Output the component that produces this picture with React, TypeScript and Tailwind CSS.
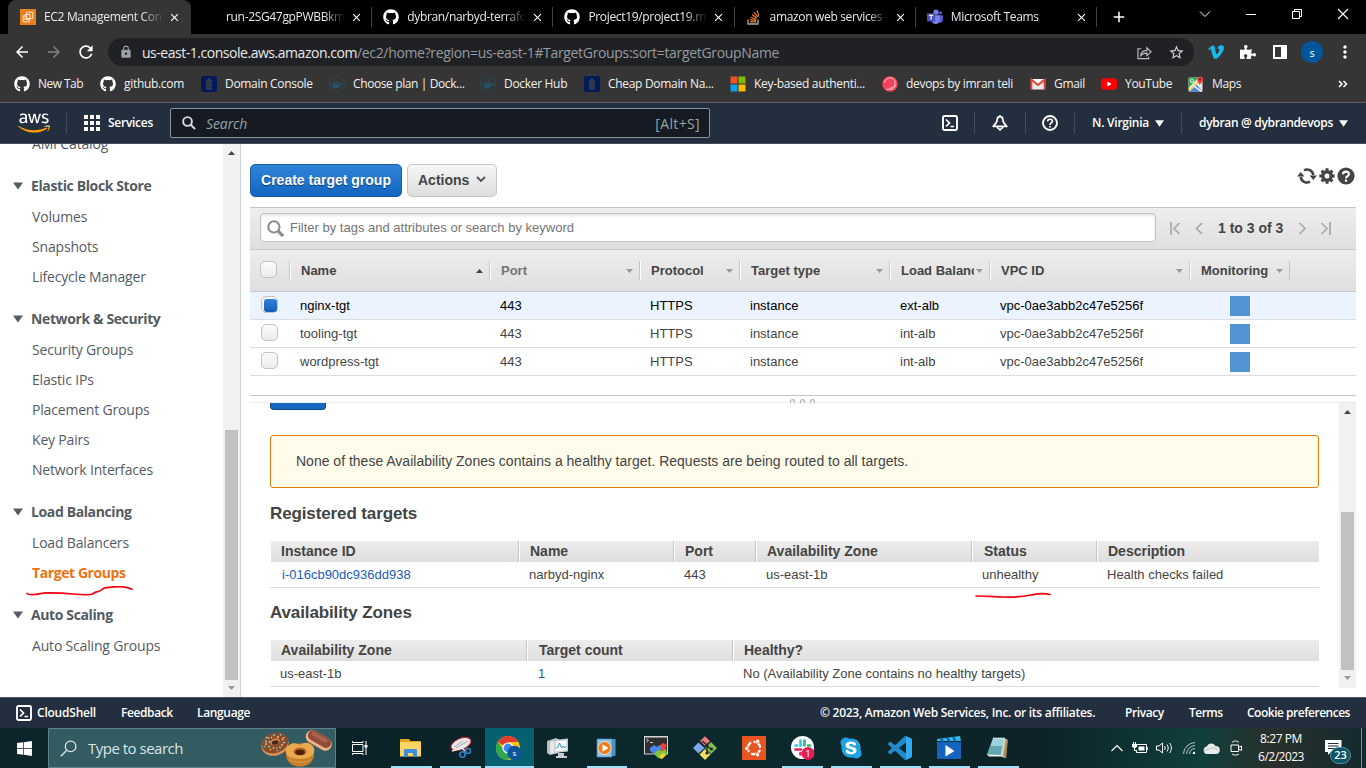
import type { ReactNode } from 'react';
import { FaGithub, FaAws, FaDocker, FaVimeoV, FaPuzzlePiece, FaWindows, FaSkype } from 'react-icons/fa';
import { MdRefresh, MdArrowBack, MdArrowForward, MdLock, MdStarBorder, MdMoreVert, MdAdd, MdClose } from 'react-icons/md';

/* ---------- small icons ---------- */

const Svg = ({ children, className = 'h-4 w-4', box = '0 0 16 16' }: { children: ReactNode; className?: string; box?: string }) => (
  <svg viewBox={box} className={`block shrink-0 ${className}`} fill="none">{children}</svg>
);

const Ec2Icon = () => (
  <Svg>
    <rect width="16" height="16" fill="#e8801f" />
    <path d="M6.500 3.200h6.300v6.300H6.500zM3.200 6.800v6h6v-1.600M3.200 6.800h1.600M5 5.500h5v5H5z" stroke="#fff2e0" strokeWidth=".9" />
  </Svg>
);
const StackIcon = () => (
  <Svg>
    <path d="M2 10.500v4.500h10v-4.500" stroke="#a9a9a9" strokeWidth="1.300" />
    <path d="M4 12.900h6M4.100 10.600l6 .8M4.700 8.200l5.600 2M6 5.600l4.900 3.400M8.100 3.300l3.700 4.700M11.200 1.500l1.500 5.800" stroke="#f48024" strokeWidth="1.200" />
  </Svg>
);
const TeamsIcon = () => (
  <Svg>
    <circle cx="9" cy="3.200" r="2.600" fill="#7b83eb" />
    <circle cx="13.400" cy="3.900" r="1.700" fill="#5059c9" />
    <path d="M10 6.200h5.200c.4 0 .8.300.8.800v3.800a2.900 2.900 0 01-5 2z" fill="#5059c9" />
    <path d="M4.500 6.200h7.700c.4 0 .7.300.7.700v4.600a4.300 4.300 0 01-8.400 0z" fill="#7b83eb" />
    <rect y="4.200" width="8.200" height="8.200" rx=".7" fill="#4b53bc" />
    <path d="M2 6.400h4.200M4.100 6.400v4.300" stroke="#fff" strokeWidth="1.100" />
  </Svg>
);
const BatteryBox = () => (
  <Svg>
    <rect width="16" height="16" rx="2" fill="#02195c" />
    <path d="M6.500 2.600h3v1.300h-3zM4.900 4.300h6.200v2H4.900zM4.900 6.800h6.200v2H4.900zM4.900 9.300h6.200v1.900H4.900zM5.200 11.700h5.600v1.700H5.200z" fill="#3a4048" />
  </Svg>
);
const DockerRing = () => (
  <span className="flex h-4 w-4 shrink-0 items-center justify-center rounded-full border border-[#24495a] text-[11px] text-[#235468]"><FaDocker /></span>
);
const MsIcon = () => (
  <Svg>
    <path d="M.5.5h7v7h-7z" fill="#f25022" /><path d="M8.500.5h7v7h-7z" fill="#7fba00" />
    <path d="M.5 8.500h7v7h-7z" fill="#00a4ef" /><path d="M8.500 8.500h7v7h-7z" fill="#ffb900" />
  </Svg>
);
const BallIcon = () => (
  <Svg>
    <circle cx="8" cy="8" r="7.800" fill="#f2425a" />
    <path d="M2.500 6.500A6 6 0 018.500 2C12 2.300 13.500 5 13 8c-.8 3-3 4.500-6 4.300M4.500 13c4 1.500 8-.5 9.500-4" stroke="#ffc9d0" strokeWidth="1" />
  </Svg>
);
const GmailIcon = () => (
  <Svg>
    <path d="M1.500 3h13v10.500h-13z" fill="#e9e9e9" />
    <path d="M1.500 3h13L8 9z" fill="#fff" />
    <path d="M1.300 13.500V3.600L8 9l6.700-5.400v9.900" stroke="#dc4437" strokeWidth="2" />
  </Svg>
);
const YoutubeIcon = () => (
  <Svg><rect y="2.200" width="16" height="11.600" rx="3" fill="#f00" /><path d="M6.300 5.600v4.800L10.600 8z" fill="#fff" /></Svg>
);
const MapsIcon = () => (
  <Svg>
    <rect x=".5" y="1.500" width="14" height="14" rx="1" fill="#e8eaed" />
    <path d="M.5 15V2.500a1 1 0 011-1h9L.5 12z" fill="#34a853" />
    <path d="M1 15.500L8 8l6.500 7.500z" fill="#4285f4" />
    <path d="M2 14L13 3" stroke="#fdd835" strokeWidth="1.800" />
    <path d="M6 10l7.500 5.500" stroke="#fff" strokeWidth="1.500" />
    <circle cx="4" cy="5" r="1.600" stroke="#fff" strokeWidth=".9" />
    <path d="M11.800 9.500C11.600 7 9.200 6.200 9.200 3.400a2.900 2.900 0 015.800 0c0 2.800-2.900 3.600-3.200 6.100z" fill="#ea4335" />
    <circle cx="12.100" cy="3.300" r="1.100" fill="#7d1f17" />
  </Svg>
);
const ShellIcon = () => (
  <Svg><rect x="1" y="1" width="14" height="14" rx="1.500" stroke="currentColor" strokeWidth="1.900" /><path d="M4 4.500L7.500 8 4 11.500M8.500 11.500H12" stroke="currentColor" strokeWidth="1.700" /></Svg>
);
const BellIcon = () => (
  <Svg><path d="M8 1.600c1.900 0 2.900 1.600 2.900 3.500 0 2.600 1.700 4 3.900 6.200H1.200c2.200-2.200 3.900-3.600 3.900-6.200 0-1.900 1-3.500 2.900-3.500zM5.600 11.500v1.200L8 15l2.400-2.300v-1.200M8 0v1.500" stroke="currentColor" strokeWidth="1.700" strokeLinejoin="round" /></Svg>
);
const HelpRing = () => (
  <Svg><circle cx="8" cy="8" r="7" stroke="currentColor" strokeWidth="1.900" /><path d="M5.600 6.500C5.600 3.500 10.500 3.600 10.400 6.300 10.300 8 8 7.900 8 9.900M8 10.900v1.700" stroke="currentColor" strokeWidth="1.700" /></Svg>
);
const Down = ({ className = 'h-[7px] w-[9px]' }: { className?: string }) => (
  <Svg box="0 0 10 7" className={className}><path d="M0 0h10L5 7z" fill="currentColor" /></Svg>
);
const SmallDown = ({ className = 'text-[#999]' }: { className?: string }) => (
  <Svg box="0 0 7 4" className={`h-1 w-[7px] ${className}`}><path d="M0 0h7L3.500 4z" fill="currentColor" /></Svg>
);
const SmallUp = ({ className = 'text-[#444]' }: { className?: string }) => (
  <Svg box="0 0 7 4" className={`h-1 w-[7px] ${className}`}><path d="M0 4h7L3.500 0z" fill="currentColor" /></Svg>
);

/* ---------- browser chrome ---------- */

const tabs: { title: string; icon: ReactNode }[] = [
  { title: 'EC2 Management Console', icon: <Ec2Icon /> },
  { title: 'run-2SG47gpPWBBkmW', icon: null },
  { title: 'dybran/narbyd-terraform', icon: <FaGithub className="h-4 w-4 text-white" /> },
  { title: 'Project19/project19.md', icon: <FaGithub className="h-4 w-4 text-white" /> },
  { title: 'amazon web services - ', icon: <StackIcon /> },
  { title: 'Microsoft Teams', icon: <TeamsIcon /> },
];

const TabStrip = () => (
  <div className="flex h-[34px] bg-black pl-2 text-[12px] tracking-[-0.33px] text-[#e8eaed]">
    {tabs.map((t, i) => (
      <div key={t.title} className={`relative flex h-full items-center ${i === 0 ? 'w-[183px] rounded-t-lg bg-[#353535] pl-3' : 'w-[181.200px] pl-[11px]'}`}>
        <span className="block h-4 w-4">{t.icon}</span>
        <span className="ml-2 w-[119px] overflow-hidden whitespace-pre [mask-image:linear-gradient(to_right,#000_82%,transparent)]">{t.title}</span>
        <MdClose className="ml-[5px] h-[13px] w-[13px] text-white" />
        {i > 0 && <span className="absolute right-0 top-[7px] h-5 w-px bg-[#444]" />}
      </div>
    ))}
    <MdAdd className="ml-[13px] mt-2 h-[18px] w-[18px] text-white" />
    <div className="ml-auto flex h-7 items-center text-white">
      <Svg box="0 0 12 12" className="mr-[34px] h-3 w-3"><path d="M1 3.500l5 5 5-5" stroke="currentColor" /></Svg>
      <Svg box="0 0 12 12" className="mr-[34px] h-3 w-3"><path d="M1 6.500h10" stroke="currentColor" /></Svg>
      <Svg box="0 0 12 12" className="mr-[34px] h-3 w-3"><path d="M1.500 3.500h7v7h-7zM3.500 3.500v-2h7v7h-2" stroke="currentColor" /></Svg>
      <Svg box="0 0 12 12" className="mr-[17px] h-3 w-3"><path d="M1 1l10 10M11 1L1 11" stroke="currentColor" strokeWidth="1.100" /></Svg>
    </div>
  </div>
);

const Toolbar = () => (
  <div className="flex h-8 items-center bg-[#353535] pl-[13px] pt-[4px]">
    <MdArrowBack className="h-[18px] w-[18px] text-white" />
    <MdArrowForward className="ml-[14px] h-[18px] w-[18px] text-[#828282]" />
    <MdRefresh className="ml-[13px] h-[20px] w-[20px] text-white" />
    <div className="ml-3 flex h-7 w-[1086px] items-center rounded-full bg-[#202124] pl-[11px] text-[14px]">
      <MdLock className="h-[14px] w-[14px] text-[#9aa0a6]" />
      <span className="ml-[9px] tracking-[-0.47px] text-[#e8eaed]">us-east-1.console.aws.amazon.com</span>
      <span className="tracking-[-0.33px] text-[#969ba1]">/ec2/home?region=us-east-1#TargetGroups:sort=targetGroupName</span>
      <Svg className="ml-auto h-[15px] w-[15px] text-[#bdc1c6]"><path d="M4.500 4H1v10.500h11.500v-2M4 11.500c0-3.500 2.500-5.500 6.500-5.500V3l4.500 4.300-4.500 4.200V8.700C7.500 8.700 5.500 9.500 4 11.500z" stroke="currentColor" strokeWidth="1.200" /></Svg>
      <MdStarBorder className="ml-4 mr-[9px] h-[17px] w-[17px] text-[#d0d3d7]" />
    </div>
    <FaVimeoV className="ml-[13px] h-[18px] w-[18px] text-[#1ab7ea]" />
    <FaPuzzlePiece className="ml-[15px] h-4 w-4 text-white" />
    <Svg className="ml-[17px] h-[14px] w-[14px]" box="0 0 14 14"><path d="M1 1h12v12H1z" stroke="#fff" strokeWidth="2" /><path d="M8 1h5v12H8z" fill="#fff" /></Svg>
    <span className="ml-[14px] flex h-[22px] w-[22px] items-center justify-center rounded-full bg-[#01579b] text-[11px] leading-none text-white">s</span>
    <MdMoreVert className="ml-[12px] h-5 w-5 text-white" />
  </div>
);

const bookmarks: { label: string; icon: ReactNode; width: string }[] = [
  { label: 'New Tab', icon: <FaGithub className="h-4 w-4 text-white" />, width: 'w-[86px] tracking-[-0.54px]' },
  { label: 'github.com', icon: <FaGithub className="h-4 w-4 text-white" />, width: 'w-[101px]' },
  { label: 'Domain Console', icon: <BatteryBox />, width: 'w-[128px]' },
  { label: 'Choose plan | Dock...', icon: <DockerRing />, width: 'w-[151px] tracking-[-0.39px]' },
  { label: 'Docker Hub', icon: <DockerRing />, width: 'w-[104px]' },
  { label: 'Cheap Domain Na...', icon: <BatteryBox />, width: 'w-[146px]' },
  { label: 'Key-based authenti...', icon: <MsIcon />, width: 'w-[152px]' },
  { label: 'devops by imran teli', icon: <BallIcon />, width: 'w-[148px]' },
  { label: 'Gmail', icon: <GmailIcon />, width: 'w-[71px]' },
  { label: 'YouTube', icon: <YoutubeIcon />, width: 'w-[87px]' },
  { label: 'Maps', icon: <MapsIcon />, width: 'w-[60px]' },
];

const Bookmarks = () => (
  <div className="flex h-[37px] items-center border-b border-[#606060] bg-[#353535] pl-[14px] text-[12px] tracking-[-0.31px] text-[#f1f1f1]">
    {bookmarks.map((b) => (
      <div key={b.label} className={`flex shrink-0 items-center gap-2 whitespace-nowrap ${b.width}`}>{b.icon}<span>{b.label}</span></div>
    ))}
    <Svg box="0 0 10 8" className="ml-[90px] h-2 w-[10px]"><path d="M1 1l3 3-3 3M5.500 1l3 3-3 3" stroke="#fff" strokeWidth="1.500" /></Svg>
  </div>
);

/* ---------- AWS console ---------- */

const Sep = ({ className }: { className: string }) => <span className={`h-[22px] w-px bg-[#414d5c] ${className}`} />;

const AwsNav = () => (
  <div className="flex h-[41px] items-center border-b border-[#414d5c] bg-[#232f3e] pl-[18px] text-[12px] font-semibold text-white">
    <div className="relative h-8 w-8">
      <FaAws className="h-8 w-8 [clip-path:inset(0_0_38%_0)]" />
      <FaAws className="absolute left-0 top-0 h-8 w-8 text-[#ff9900] [clip-path:inset(62%_0_0_0)]" />
    </div>
    <Sep className="ml-4" />
    <Svg className="ml-[17px] h-4 w-4">
      {[0, 6, 12].map((y) => [0, 6, 12].map((x) => <rect key={`${x}-${y}`} x={x} y={y} width="4" height="4" fill="#fff" />))}
    </Svg>
    <span className="ml-2 w-[45px] tracking-[-0.27px]">Services</span>
    <div className="ml-[17px] flex h-[30px] w-[540px] items-center rounded-[2px] border border-[#879596] bg-[#161a22] pl-[11px] pr-[9px] text-[14px] font-normal text-[#95a5a6]">
      <Svg className="h-[14px] w-[14px]"><circle cx="6.300" cy="6.300" r="5" stroke="#d5dbdb" strokeWidth="2.200" /><path d="M10 10l5 5" stroke="#d5dbdb" strokeWidth="2.400" /></Svg>
      <span className="ml-[10px] italic tracking-[-0.1px]">Search</span>
      <span className="ml-auto tracking-[0.35px]">[Alt+S]</span>
    </div>
    <div className="ml-[232px] flex items-center">
      <ShellIcon />
      <Sep className="ml-4" />
      <span className="ml-[17px]"><BellIcon /></span>
      <Sep className="ml-[17px]" />
      <span className="ml-4"><HelpRing /></span>
      <Sep className="ml-4" />
      <span className="ml-[17px] w-[57px] whitespace-nowrap tracking-[-0.25px]">N. Virginia</span>
      <Down className="ml-[6px] h-[7px] w-[9px]" />
      <Sep className="ml-[17px]" />
      <span className="ml-[17px] w-[134px] whitespace-nowrap tracking-[-0.32px]">dybran @ dybrandevops</span>
      <Down className="ml-[6px] h-[7px] w-[9px]" />
    </div>
  </div>
);

const groups: { name: string; items: string[] }[] = [
  { name: 'Elastic Block Store', items: ['Volumes', 'Snapshots', 'Lifecycle Manager'] },
  { name: 'Network & Security', items: ['Security Groups', 'Elastic IPs', 'Placement Groups', 'Key Pairs', 'Network Interfaces'] },
  { name: 'Load Balancing', items: ['Load Balancers', 'Target Groups'] },
  { name: 'Auto Scaling', items: ['Auto Scaling Groups'] },
];

const Sidebar = () => (
  <aside className="flex h-full w-[241px] shrink-0 border-r border-[#cdd4d9] text-[14px] text-[#545b64]">
    <div className="relative h-full w-[223px] overflow-hidden">
      <div className="-mt-[10px] h-5 pl-8 leading-5 tracking-[-0.16px]">AMI Catalog</div>
      {groups.map((g) => (
        <div key={g.name} className="pt-[15px]">
          <div className="flex h-[30px] items-center pl-[13px] pt-[4px] font-bold tracking-[-0.38px]">
            <Down className="mr-2 h-2 w-[10px]" /><span className="mb-[2px]">{g.name}</span>
          </div>
          <div className="-mb-[5px] pt-[3px]">
            {g.items.map((it) => (
              <div key={it} className={`h-[30px] pl-8 leading-[30px] ${it === 'Target Groups' ? 'font-bold tracking-[-0.42px] text-[#ec7211]' : 'tracking-[-0.18px]'}`}>{it}</div>
            ))}
          </div>
        </div>
      ))}
      <svg viewBox="0 0 110 14" className="absolute left-[24px] top-[442px] h-[14px] w-[110px]" fill="none">
        <path d="M3 7.500c1 1 3 1.300 8 1 5-.8 8-1.800 14-1.700 10 .1 16 .4 24 1.200 8 .8 17 1.500 20-.2 2-2 3-1.500 6-2.500 4-1.200 3-3 6-3.400 5-.5 10-1.600 16-1.200 5 .3 7 1 11 2.500" stroke="#f5000c" strokeWidth="1.700" strokeLinecap="round" />
      </svg>
    </div>
    <div className="flex h-full w-[17px] flex-col items-center bg-[#f1f1f1] pt-[7px]">
      <SmallUp />
      <div className="mt-[275px] h-[250px] w-[13px] bg-[#c1c1c1]" />
      <div className="mt-[6px]"><SmallDown /></div>
    </div>
  </aside>
);

const cols: { name: string; width: string }[] = [
  { name: 'Name', width: 'w-[200px]' },
  { name: 'Port', width: 'w-[150px]' },
  { name: 'Protocol', width: 'w-[100px]' },
  { name: 'Target type', width: 'w-[150px]' },
  { name: 'Load Balancer', width: 'w-[100px]' },
  { name: 'VPC ID', width: 'w-[200px]' },
  { name: 'Monitoring', width: 'w-[100px]' },
];
const rows: string[][] = [
  ['nginx-tgt', '443', 'HTTPS', 'instance', 'ext-alb', 'vpc-0ae3abb2c47e5256f'],
  ['tooling-tgt', '443', 'HTTPS', 'instance', 'int-alb', 'vpc-0ae3abb2c47e5256f'],
  ['wordpress-tgt', '443', 'HTTPS', 'instance', 'int-alb', 'vpc-0ae3abb2c47e5256f'],
];

const CheckBox = ({ checked = false, className = '' }: { checked?: boolean; className?: string }) => (
  <span className={`block h-[17px] w-[17px] rounded-[5px] border border-[#c3c3c3] bg-gradient-to-b from-[#fbfbfb] to-[#ececec] pl-[2px] pt-[2px] ${className}`}>
    {checked && <span className="block h-[13px] w-[13px] rounded-[3px] bg-gradient-to-b from-[#2f83d8] to-[#1160b8]" />}
  </span>
);

const Pager = () => (
  <div className="flex items-center pt-[2px] text-[#a9a9a9]">
    <Svg box="0 0 11 13" className="ml-[14px] h-[13px] w-[11px]"><path d="M1 0v13M9.500 1L4 6.500 9.500 12" stroke="currentColor" strokeWidth="1.700" /></Svg>
    <Svg box="0 0 11 13" className="ml-[12px] h-[13px] w-[11px]"><path d="M9 1L3.500 6.500 9 12" stroke="currentColor" strokeWidth="1.700" /></Svg>
    <span className="ml-[14px] w-[66px] whitespace-nowrap text-[14px] font-bold text-[#444]">1 to 3 of 3</span>
    <Svg box="0 0 11 13" className="ml-[13px] h-[13px] w-[11px]"><path d="M2.500 1L8 6.500 2.500 12" stroke="currentColor" strokeWidth="1.700" /></Svg>
    <Svg box="0 0 11 13" className="ml-[12px] h-[13px] w-[11px]"><path d="M10 0v13M1.500 1L7 6.500 1.500 12" stroke="currentColor" strokeWidth="1.700" /></Svg>
  </div>
);

const GroupTable = () => (
  <div className="mt-[10px] w-[1106px] border-t border-[#c5c5c5] text-[13px]">
    <div className="flex h-[42px] items-center border-b border-[#c9c9c9] bg-gradient-to-b from-[#eeeeee] to-[#dfdfdf] pb-[3px] pl-[10px]">
      <div className="flex h-[29px] w-[896px] items-center rounded border border-[#c4c4c4] bg-white pl-[6px] text-[#757575] shadow-[inset_0_2px_3px_#e6e6e6]">
        <Svg className="mt-[2px] h-[17px] w-[17px]"><circle cx="6.500" cy="6.500" r="5.300" stroke="#8a8a8a" strokeWidth="1.900" /><path d="M10.500 10.500l4.700 4.600" stroke="#8a8a8a" strokeWidth="3" /></Svg>
        <span className="ml-[6px] mt-[2px]">Filter by tags and attributes or search by keyword</span>
      </div>
      <Pager />
    </div>
    <div className="flex h-[42px] items-center border-b border-[#c6c6c6] bg-gradient-to-b from-[#ededed] to-[#dfdfdf] font-bold text-[#444]">
      <div className="flex w-10 border-r border-[#c5c5c5] pb-[2px] pl-[10px]"><CheckBox /></div>
      {cols.map((c, i) => (
        <div key={c.name} className={`flex h-[19px] items-center border-l border-white border-r border-r-[#c5c5c5] pl-[10px] pr-[6px] ${c.width} ${i === 1 ? 'text-[#757575]' : ''}`}>
          <span className="mr-[2px] min-w-0 flex-1 overflow-hidden whitespace-nowrap">{c.name}</span>
          {i === 0 ? <SmallUp /> : <SmallDown />}
        </div>
      ))}
    </div>
    {rows.map((r, i) => (
      <div key={r[0]} className={`flex h-7 items-center border-b border-[#dcdcdc] ${i === 0 ? 'bg-[#eaf3fe] text-black' : 'text-[#444]'}`}>
        <div className="w-10 pl-[11px]"><CheckBox checked={i === 0} className="-mt-[3px]" /></div>
        {r.map((v, k) => <div key={cols[k].name} className={`pl-[10px] ${cols[k].width}`}>{v}</div>)}
        <div className="w-[100px] pl-10"><div className="mt-px h-5 w-5 bg-[#5294d1]" /></div>
      </div>
    ))}
  </div>
);

const RoundTools = () => (
  <div className="flex items-center text-[#444]">
    <Svg box="0 0 20 18" className="h-[18px] w-5">
      <path d="M3.700 10A6.300 6.300 0 0013 14.700M16.300 8A6.300 6.300 0 007 3.300" stroke="currentColor" strokeWidth="2.600" />
      <path d="M0 9.500L3.700 5l3.800 4.500zM12.500 8.500h7.500L16.300 13z" fill="currentColor" />
    </Svg>
    <Svg className="ml-[2px] h-4 w-4">
      <circle cx="8" cy="8" r="4.200" stroke="currentColor" strokeWidth="3.400" />
      <path d="M8 .3v3M8 12.700v3M.3 8h3M12.700 8h3M2.600 2.600l2 2M11.400 11.400l2 2M2.600 13.400l2-2M11.400 4.600l2-2" stroke="currentColor" strokeWidth="3" />
    </Svg>
    <Svg box="0 0 18 18" className="ml-[2px] h-[18px] w-[18px]"><circle cx="9" cy="9" r="8.600" fill="currentColor" /><path d="M6 7.300C6 3.800 12 3.900 12 7 12 9.100 9 9 9 11.200M9 12.500v2.200" stroke="#fff" strokeWidth="2.200" /></Svg>
  </div>
);

type Cell = { head: string; value: string; width: string; headPad: string; valuePad: string };
const targetCells: Cell[] = [
  { head: 'Instance ID', value: 'i-016cb90dc936dd938', width: 'w-[248px]', headPad: 'pl-[10px]', valuePad: 'pl-[11px] text-[#1a60b8]' },
  { head: 'Name', value: 'narbyd-nginx', width: 'w-[155px]', headPad: 'pl-[11px]', valuePad: 'pl-[10px]' },
  { head: 'Port', value: '443', width: 'w-[82px]', headPad: 'pl-[11px]', valuePad: 'pl-[10px]' },
  { head: 'Availability Zone', value: 'us-east-1b', width: 'w-[216px]', headPad: 'pl-[11px]', valuePad: 'pl-[10px]' },
  { head: 'Status', value: 'unhealthy', width: 'w-[125px]', headPad: 'pl-[12px]', valuePad: 'pl-[10px]' },
  { head: 'Description', value: 'Health checks failed', width: 'w-[222px]', headPad: 'pl-[11px]', valuePad: 'pl-[10px]' },
];
const zoneCells: Cell[] = [
  { head: 'Availability Zone', value: 'us-east-1b', width: 'w-[256px]', headPad: 'pl-[10px]', valuePad: 'pl-[9px]' },
  { head: 'Target count', value: '1', width: 'w-[206px]', headPad: 'pl-[12px]', valuePad: 'pl-[11px] text-[#2a5a80]' },
  { head: 'Healthy?', value: 'No (Availability Zone contains no healthy targets)', width: 'w-[586px]', headPad: 'pl-[11px]', valuePad: 'pl-[10px]' },
];

const DetailTable = ({ cells }: { cells: Cell[] }) => (
  <div className="w-[1049px] border-b border-[#dadada]">
    <div className="ml-px flex h-[21px] items-center bg-gradient-to-b from-[#ededed] to-[#dedede] text-[14px] font-bold text-[#444]">
      {cells.map((c, i) => (
        <div key={c.head} className={`h-[21px] shrink-0 whitespace-nowrap leading-[21px] ${c.headPad} ${c.width} ${i < cells.length - 1 ? 'border-r border-[#c5c5c5] shadow-[1px_0_0_#fff]' : ''}`}>{c.head}</div>
      ))}
    </div>
    <div className="flex h-[25px] pl-px text-[13px] text-[#444]">
      {cells.map((c) => (
        <div key={c.head} className={`shrink-0 whitespace-nowrap leading-[25px] ${c.width} ${c.valuePad}`}>{c.value}</div>
      ))}
    </div>
  </div>
);

const Details = () => (
  <div className="flex h-[285px] w-[1106px]">
    <div className="relative w-[1089px] pl-5">
      <div className="h-[7px] w-14 rounded-b border border-t-0 border-[#12457f] bg-[#1568c2]" />
      <div className="mt-[25px] flex h-[53px] w-[1049px] items-center rounded-[3px] border border-[#df7d0c] bg-[#fffceb] pl-[25px] text-[14px] text-[#444]">
        None of these Availability Zones contains a healthy target. Requests are being routed to all targets.
      </div>
      <h2 className="mt-4 h-[37px] text-[17px] font-bold leading-5 tracking-[-0.12px] text-[#444]">Registered targets</h2>
      <DetailTable cells={targetCells} />
      <h2 className="mt-[15px] h-[37px] text-[17px] font-bold leading-5 tracking-[-0.12px] text-[#444]">Availability Zones</h2>
      <DetailTable cells={zoneCells} />
      <svg viewBox="0 0 80 10" className="absolute left-[723px] top-[187px] h-[10px] w-20" fill="none">
        <path d="M3 6c8-.2 16 .5 27 1 12 .6 20-.4 28-2 6-1.200 11-2.400 19-.5" stroke="#f5000c" strokeWidth="1.700" strokeLinecap="round" />
      </svg>
    </div>
    <div className="flex h-full w-[17px] flex-col items-center bg-[#f1f1f1] pt-[7px]">
      <SmallUp />
      <div className="mt-[98px] h-[158px] w-[13px] bg-[#c1c1c1]" />
      <div className="mt-[6px]"><SmallDown /></div>
    </div>
  </div>
);

const Main = () => (
  <main className="h-full flex-1 overflow-hidden pl-[9px] pt-5 font-['Liberation_Sans',Arial,sans-serif]">
    <div className="flex h-[33px] text-[14px] font-bold">
      <button className="h-[33px] w-[152px] whitespace-nowrap rounded-[5px] border border-[#165cab] bg-gradient-to-b from-[#3083d9] to-[#1266c0] text-white [text-shadow:0_1px_1px_#0b3c73]">Create target group</button>
      <button className="ml-[5px] flex h-[33px] w-[90px] items-center rounded-[5px] border border-[#c6c6c6] bg-gradient-to-b from-[#f6f6f6] to-[#dedede] pl-[10px] text-[#444]">
        Actions
        <Svg box="0 0 10 7" className="mb-[2px] ml-[7px] h-[7px] w-[10px]"><path d="M1 1l4 4 4-4" stroke="#555" strokeWidth="1.900" /></Svg>
      </button>
      <div className="-mt-[11px] ml-[800px] flex items-center pt-px"><RoundTools /></div>
    </div>
    <GroupTable />
    <div className="relative mt-[19px] h-2 w-[1106px] border-b border-t border-b-[#ebebeb] border-t-[#c4c4c4]">
      <div className="absolute left-[540px] top-[3px] flex h-[3px] gap-[5px]">
        {[0, 1, 2].map((d) => <span key={d} className="h-[4px] w-[5px] rounded-t-full border border-b-0 border-[#b5b5b5] bg-[#eee]" />)}
      </div>
    </div>
    <Details />
  </main>
);

const Footer = () => (
  <div className="flex h-[31px] items-center border-t border-[#4b5563] bg-[#232f3e] pl-4 text-[12px] font-semibold text-white">
    <ShellIcon />
    <span className="ml-[5px] w-[84px] tracking-[-0.22px]">CloudShell</span>
    <span className="w-[76px] tracking-[-0.4px]">Feedback</span>
    <span className="w-[623px] tracking-[-0.35px]">Language</span>
    <span className="w-[305px] whitespace-nowrap tracking-[-0.27px]">© 2023, Amazon Web Services, Inc. or its affiliates.</span>
    <span className="w-16 tracking-[-0.4px]">Privacy</span>
    <span className="w-[58px] tracking-[-0.5px]">Terms</span>
    <span className="whitespace-nowrap tracking-[-0.49px]">Cookie preferences</span>
  </div>
);

/* ---------- Windows taskbar ---------- */

const Pastries = () => (
  <svg viewBox="0 0 74 38" className="ml-auto mr-[2px] block h-[38px] w-[74px]" fill="none">
    <ellipse cx="16" cy="15.500" rx="13.800" ry="11" transform="rotate(-18 16 15.500)" fill="#d9935a" />
    <ellipse cx="16" cy="14" rx="13.500" ry="10" transform="rotate(-18 16 14)" fill="#8e4a2c" />
    <ellipse cx="16" cy="12.800" rx="5" ry="3.200" transform="rotate(-18 16 13)" fill="#d38a50" />
    <ellipse cx="16" cy="13.500" rx="3.500" ry="2" transform="rotate(-18 16 13)" fill="#4b2416" />
    <path d="M6 12l2 1M9 8l1 2M14 6l2 .5M21 5l1 1.500M25 8l-1 2M26 13l-2 1M20 18l2 1M14 20l1-2M9 18l2-1M5 17l1 1M18 22l1-1M11 12l-1 2" stroke="#5fd0c5" strokeWidth="1.400" />
    <path d="M7 9l1-1M12 9l1-1M18 8l2 0M23 11l1-1M22 16l2 0M17 19l1 0M11 21l1-1M6 15l2 0" stroke="#f3c34a" strokeWidth="1.400" />
    <g transform="rotate(30 60 11)">
      <rect x="46" y="5" width="28" height="13" rx="6.500" fill="#f0b184" />
      <rect x="47.500" y="5" width="25" height="10" rx="5" fill="#8f4b37" />
      <rect x="50" y="6.500" width="18" height="4" rx="2" fill="#a9634c" />
    </g>
    <ellipse cx="41" cy="26" rx="14" ry="11.500" fill="#c87f2c" />
    <path d="M27 20c3-6 8-7 14-4 5-4 12-2 14 3 2 6-4 11-14 11s-16-4-14-10z" fill="#eaa94e" />
    <ellipse cx="41" cy="22.500" rx="6.500" ry="4" fill="#b86a25" />
    <ellipse cx="41" cy="23.200" rx="4.800" ry="2.800" fill="#4e2108" />
    <path d="M30 30c5 4 17 5 22 0" stroke="#dc9a48" strokeWidth="1" />
  </svg>
);

const big = 'h-6 w-6';
const b24 = '0 0 24 24';

const apps: { id: string; icon: ReactNode; open: boolean; active?: boolean }[] = [
  { id: 'explorer', open: true, icon: (
    <Svg box={b24} className={big}><path d="M1 4c0-.6.400-1 1-1h8l1.500 2H21c.6 0 1 .4 1 1v14H1z" fill="#e9a417" /><path d="M1 6h21v14.500H1z" fill="#fcd462" /><path d="M5 21v-6.500c0-.8.600-1.500 1.500-1.500h10c.9 0 1.500.7 1.500 1.500V21h-4v-4H9v4z" fill="#3c8fe0" /></Svg>) },
  { id: 'snip', open: true, icon: (
    <Svg box={b24} className={big}><ellipse cx="13" cy="8" rx="10.500" ry="5.500" transform="rotate(-22 13 8)" fill="#e9eaec" stroke="#c9252b" strokeWidth="1" /><path d="M6 11l9-6M8 12l12-7" stroke="#a5a8ad" /><path d="M4 15l10-3M13 11l5 5" stroke="#eee" strokeWidth="1.500" /><circle cx="14.500" cy="18.500" r="2.700" stroke="#2f7fc5" strokeWidth="1.600" /><circle cx="20" cy="15" r="2.500" stroke="#2f7fc5" strokeWidth="1.600" /></Svg>) },
  { id: 'chrome', open: true, active: true, icon: (
    <Svg box="0 0 26 24" className="h-6 w-[26px]">
      <circle cx="12" cy="12" r="12" fill="#fbc116" />
      <path d="M12 12L1.600 6A12 12 0 0122.400 6H12z" fill="#e33b2e" /><path d="M1.600 6A12 12 0 0012 24l5-9-9-1z" fill="#2da94f" />
      <circle cx="12" cy="12" r="5.600" fill="#fff" /><circle cx="12" cy="12" r="4.400" fill="#4285f4" />
      <circle cx="18.500" cy="17" r="7.200" fill="#0b559b" /><text x="18.500" y="19.700" fontSize="8" textAnchor="middle" fill="#fff">s</text>
    </Svg>) },
  { id: 'monitor', open: false, icon: (
    <Svg box={b24} className={big}><path d="M1 5l9-3 3 2v13l-9 2-3-2z" fill="#b9bdc1" /><path d="M4 6l9-3v13l-9 2z" fill="#e5e7e9" /><path d="M8 4l14-1.500v13L8 17z" fill="#c9cdd1" /><path d="M9.500 5.500l11-1.300v10l-11 1.300z" fill="#f5fafd" /><path d="M10 12l2-1 1.500-4 2 5 1.500-2 1.500 2 2-2" stroke="#3d92c4" /><path d="M12 17h6v3h3v2H10v-2h2z" fill="#c9ccd0" /></Svg>) },
  { id: 'player', open: true, icon: (
    <Svg box={b24} className={big}><path d="M5 3h15.500v17H8z" fill="#4b95c6" /><path d="M2 3h15v18H2z" fill="#8fc6e4" stroke="#3f84b3" strokeWidth=".7" /><circle cx="9.500" cy="12" r="6.500" fill="#ef7d1a" stroke="#fff" strokeWidth=".6" /><path d="M7.500 8.500v7l6-3.500z" fill="#fff" /></Svg>) },
  { id: 'terminal', open: false, icon: (
    <Svg box={b24} className={big}><rect y="0" width="24" height="18.500" fill="#d5d5d5" /><path d="M1 1.500h22v16H1z" fill="#303030" /><path d="M2.500 3l2 1.500-2 1.500M6 6.500h3" stroke="#fff" strokeWidth=".8" /><path d="M15 10l4-3 4 2-2 5-4 3z" fill="#e9433c" /><path d="M6 12l4-3 3 2 2-2 3 3-6 6-3-1-3-2z" fill="#4a86ee" /><path d="M10 18l4-4 4 1 4-2 1 5-5 5-4-1z" fill="#7dc832" /><path d="M15 20l4-3 3 2-4 4z" fill="#f3cf3a" /></Svg>) },
  { id: 'git', open: false, icon: (
    <Svg box={b24} className={big}><path d="M12 .3L17 5l-5 5-5-5z" fill="#ef7a7a" /><path d="M5.500 6.500l6 5.500-6 5.500L0 12z" fill="#7fa8ec" /><path d="M18 6l6 6-6 6-6-6z" fill="#80b955" /><path d="M12 13l5.500 5.500L12 24l-5.500-5.500z" fill="#f2dc62" /><path d="M9 5l5 4v9M14 10l4 3" stroke="#1c2b20" strokeWidth="1.300" /><circle cx="14" cy="9" r="1.600" fill="#1c2b20" /><circle cx="14" cy="17" r="1.600" fill="#1c2b20" /><circle cx="18.500" cy="13" r="1.600" fill="#1c2b20" /></Svg>) },
  { id: 'ubuntu', open: false, icon: (
    <Svg box={b24} className={big}><path d="M0 0h24v24H0z" fill="#e95420" /><circle cx="12" cy="12" r="6.200" stroke="#fff" strokeWidth="2.200" strokeDasharray="10.500 2.490" strokeDashoffset="-2" /><circle cx="4.700" cy="12.500" r="2" fill="#fff" stroke="#e95420" strokeWidth=".8" /><circle cx="15.700" cy="5.300" r="2.100" fill="#fff" stroke="#e95420" strokeWidth=".8" /><circle cx="15.500" cy="18.800" r="2.100" fill="#fff" stroke="#e95420" strokeWidth=".8" /></Svg>) },
  { id: 'slack', open: true, icon: (
    <Svg box={b24} className={big}>
      <circle cx="11.500" cy="11.500" r="11.500" fill="#fff" />
      <path d="M9.500 4.500v5.500" stroke="#36c5f0" strokeWidth="2.600" strokeLinecap="round" /><path d="M4.500 9.500H6" stroke="#36c5f0" strokeWidth="2.600" strokeLinecap="round" />
      <path d="M13.500 4.500v5M17 9.500h2" stroke="#2eb67d" strokeWidth="2.600" strokeLinecap="round" />
      <path d="M4.500 13.500H10M9.500 17v1.500" stroke="#e01e5a" strokeWidth="2.600" strokeLinecap="round" /><path d="M13.500 13.500H18" stroke="#ecb22e" strokeWidth="2.600" strokeLinecap="round" />
      <circle cx="17" cy="17.500" r="6.500" fill="#e01e5a" /><text x="17" y="20.900" fontSize="9.500" textAnchor="middle" fill="#fff">1</text>
    </Svg>) },
  { id: 'skype', open: true, icon: (
    <span className="flex h-6 w-6 items-center justify-center rounded-full bg-[radial-gradient(circle,#fff_55%,transparent_56%)] text-[24px] text-[#1ba3e6]"><FaSkype /></span>) },
  { id: 'vscode', open: true, icon: (
    <Svg box={b24} className={big}>
      <path d="M23.150 2.587L18.210.21a1.494 1.494 0 0 0-1.705.29l-9.460 8.630-4.120-3.128a.999.999 0 0 0-1.276.057L.327 7.261A1 1 0 0 0 .326 8.740L3.899 12 .326 15.260a1 1 0 0 0 .001 1.479L1.650 17.940a.999.999 0 0 0 1.276.057l4.120-3.128 9.460 8.630a1.492 1.492 0 0 0 1.704.29l4.942-2.377A1.500 1.500 0 0 0 24 20.060V3.939a1.500 1.500 0 0 0-.85-1.352zm-5.146 14.861L10.826 12l7.178-5.448v10.896z" fill="#2489ca" />
      <path d="M18 .3l5.150 2.287A1.500 1.500 0 0124 3.939V20.060a1.500 1.500 0 01-.85 1.352L18 23.700z" fill="#2fabf3" />
    </Svg>) },
  { id: 'movies', open: true, icon: (
    <Svg box={b24} className={big}><path d="M0 3l23-3 1 5H0z" fill="#37b7ee" /><path d="M4 2.500L7 7M10 1.700L13 6M16 1l3 5" stroke="#0c5a9c" strokeWidth="2" /><path d="M0 6h24v16a1 1 0 01-1 1H1a1 1 0 01-1-1z" fill="#1464bd" /><path d="M8.500 9v11.500L17.500 15z" fill="#fff" /></Svg>) },
  { id: 'notepad', open: true, icon: (
    <Svg box={b24} className={big}><path d="M7 2l14 1-1 19-4-1z" fill="#d8d3bf" /><path d="M20 3l2 1-2 18-3-2z" fill="#a88f56" /><path d="M7 2h12l-4 17H1z" fill="#9fd3dc" /><path d="M4 10h12l-1.500 9H1z" fill="#62a5b3" /><path d="M1 18.500l14 .5 2 1.500H3z" fill="#eef4f4" /><path d="M7 2.200h12" stroke="#e6eef0" strokeWidth="1.400" strokeDasharray="1.500 1" /></Svg>) },
];

const Tray = () => (
  <div className="ml-auto flex h-full items-center text-white">
    <Svg box="0 0 12 8" className="h-2 w-3"><path d="M.5 7L6 1.500 11.500 7" stroke="currentColor" strokeWidth="1.100" /></Svg>
    <Svg box="0 0 16 12" className="ml-[9px] h-3 w-4"><path d="M4.500 2.500H14.500v8H4.500V8M15.700 5v3" stroke="currentColor" /><path d="M6.500 4.500h6v4h-6z" fill="currentColor" /><path d="M1.500 0v2M3.500 0v2" stroke="currentColor" /><path d="M0 2h5v2.500L3.500 6h-2L0 4.500z" fill="currentColor" /><path d="M2.500 6v2.500h2" stroke="currentColor" /></Svg>
    <Svg box="0 0 17 14" className="ml-2 h-[14px] w-[17px]"><path d="M.5 5v4h2.500l3.500 3V2L3 5zM8.500 5c.8 1.200.8 2.800 0 4M11 3.500c1.600 2 1.600 5 0 7M13.500 2c2.500 3 2.500 7 0 10" stroke="currentColor" /></Svg>
    <Svg box="0 0 14 14" className="ml-[9px] h-[14px] w-[14px]"><path d="M13 1.500A12 12 0 001.500 13M13 4.500A9 9 0 004.500 13M13 7.500A6 6 0 007.500 13" stroke="currentColor" strokeWidth=".9" opacity=".8" /><path d="M13 10.500A3 3 0 0010.500 13H13z" fill="currentColor" /></Svg>
    <Svg box="0 0 17 11" className="ml-[7px] h-[11px] w-[17px]"><path d="M4 11a3.800 3.800 0 01-.3-7.500A5 5 0 0112.500 3 4 4 0 0113 11z" fill="#e9eaea" /><path d="M1 9c1.500-3 4-3 6-3 2-2 6-1.500 7.500 1" stroke="#a9b2b2" strokeWidth=".8" /></Svg>
    <Svg box="0 0 14 16" className="ml-[9px] h-4 w-[14px]"><path d="M2 5h7.500v6.500H2zM9.500 7.500L12.500 6v4.500L9.500 9M3 2.500C5 .5 8 .5 10 2.500M3 14c2 1.500 5 1.500 7 0" stroke="currentColor" /></Svg>
    <div className="ml-[9px] flex w-[58px] flex-col items-center text-[12px] leading-[18px]">
      <span className="tracking-[-0.41px]">8:27 PM</span>
      <span className="tracking-[-0.5px]">6/2/2023</span>
    </div>
    <div className="relative ml-[15px] mt-2 h-6 w-[27px]">
      <svg viewBox="0 0 17 16" className="block h-4 w-[17px]"><path d="M0 0h16.500v12H6l-3 3v-3H0z" fill="#fff" /><path d="M3 3.500h10.500M3 6h10.500M3 8.500h7" stroke="#17323a" /></svg>
      <span className="absolute left-[5px] top-[7px] flex h-[17px] w-[21px] items-center justify-center rounded-full border border-[#5e8f98] bg-[#0b5564] text-[11px] font-semibold tracking-[-0.1px]">23</span>
    </div>
    <span className="ml-[9px] h-full w-px bg-[#7a8f90]" />
    <span className="w-1" />
  </div>
);

const Taskbar = () => (
  <div className="flex h-10 bg-[linear-gradient(90deg,#0b252b_0%,#0a2328_30%,#0b2a2e_55%,#0c2226_76%,#0f3f3c_88%,#2a302b_93%,#132a2f_100%)]">
    <div className="flex w-12 items-center pl-4 text-white"><FaWindows className="h-[17px] w-[17px]" /></div>
    <div className="flex w-[288px] items-center border border-[#5d8288] bg-[#335b62] pl-[11px] text-[15px] tracking-[-0.5px] text-[#dbe5e6]">
      <Svg className="h-[17px] w-[17px]"><circle cx="10" cy="6" r="5" stroke="currentColor" strokeWidth="1.200" /><path d="M6.300 9.700L.8 15.200" stroke="currentColor" strokeWidth="1.300" /></Svg>
      <span className="ml-[11px]">Type to search</span>
      <Pastries />
    </div>
    <div className="flex w-[51px] items-center pl-4 text-white">
      <Svg><path d="M.5 1v1.500h10.500V1M.5 15v-1.500h10.500V15M.5 4.500h10.500v7H.5zM14 1v14" stroke="currentColor" /><path d="M12.500 5h3v2.500h-3z" fill="currentColor" /></Svg>
    </div>
    {apps.map((a) => (
      <div key={a.id} className={`relative flex w-[48.900px] items-center justify-center ${a.active ? 'bg-[#07606f]' : ''}`}>
        {a.icon}
        {a.open && <span className={`absolute bottom-0 h-[2px] bg-[#a0e0fa] ${a.active ? 'inset-x-0' : 'inset-x-[4px]'}`} />}
      </div>
    ))}
    <Tray />
  </div>
);

export default function App() {
  return (
    <div className="flex h-[768px] w-[1366px] flex-col overflow-hidden bg-white font-['Open_Sans','Noto_Sans',sans-serif]">
      <TabStrip />
      <Toolbar />
      <Bookmarks />
      <AwsNav />
      <div className="flex h-[553px] overflow-hidden">
        <Sidebar />
        <Main />
      </div>
      <Footer />
      <Taskbar />
    </div>
  );
}
